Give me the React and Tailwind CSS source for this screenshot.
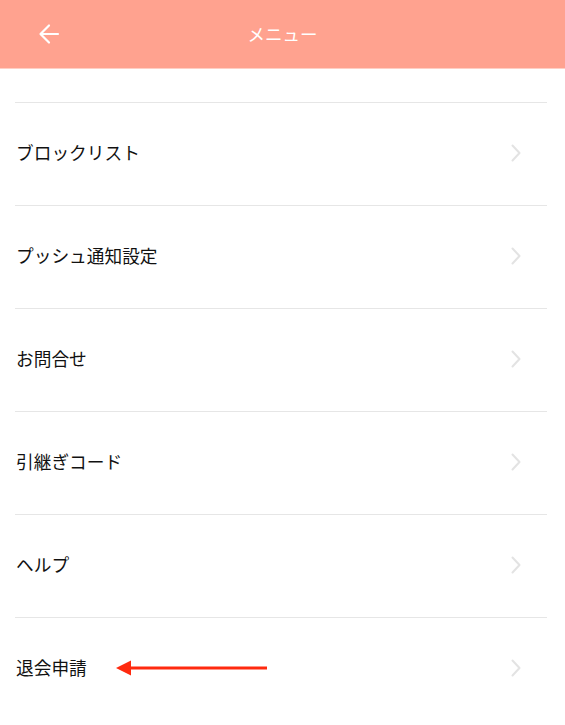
import React from "react";

const items = ["ブロックリスト", "プッシュ通知設定", "お問合せ", "引継ぎコード", "ヘルプ", "退会申請"];

function Chevron() {
  return (
    <svg width="10" height="18" viewBox="0 0 10 18" fill="none" className="shrink-0">
      <path d="M1.5 1.5 L8.5 9 L1.5 16.5" stroke="#e3e3e3" strokeWidth="2" strokeLinecap="round" strokeLinejoin="round" />
    </svg>
  );
}

export default function App() {
  return (
    <div className="w-[565px] h-[725px] bg-white overflow-hidden" style={{ fontFamily: '"Noto Sans CJK JP", "Noto Sans", sans-serif' }}>
      <header className="h-[69px] bg-[#ffa28f] border-b border-[#ffcfc4] flex items-center relative">
        <div className="w-[96px] flex justify-center pl-[1px]">
          <svg width="22" height="22" viewBox="0 0 22 22" fill="none">
            <path d="M20 11 H3 M11 2.5 L2.5 11 L11 19.5" stroke="white" strokeWidth="2.2" strokeLinecap="round" strokeLinejoin="round" />
          </svg>
        </div>
        <div className="flex-1 text-center text-white text-[17.5px] pr-[96px] leading-none pb-[1px]">メニュー</div>
      </header>
      <div className="h-[33px]" />
      <div className="pl-[15px] pr-[18px]">
        {items.map((t, i) => (
          <div key={t} className="border-t border-[#e6e6e6] h-[103px] flex items-center pl-[1px] pr-[26px] pb-[2px]">
            <span className="text-[17.7px] text-[#111] leading-none">{t}</span>
            {i === items.length - 1 && (
              <svg width="151" height="16" viewBox="0 0 151 16" className="ml-[29px] mt-[0px]">
                <path d="M0 8 L15 0.5 L15 15.5 Z" fill="#ff2a0f" />
                <rect x="12" y="6.5" width="139" height="3" fill="#ff2a0f" />
              </svg>
            )}
            <div className="flex-1" />
            <Chevron />
          </div>
        ))}
      </div>
    </div>
  );
}
